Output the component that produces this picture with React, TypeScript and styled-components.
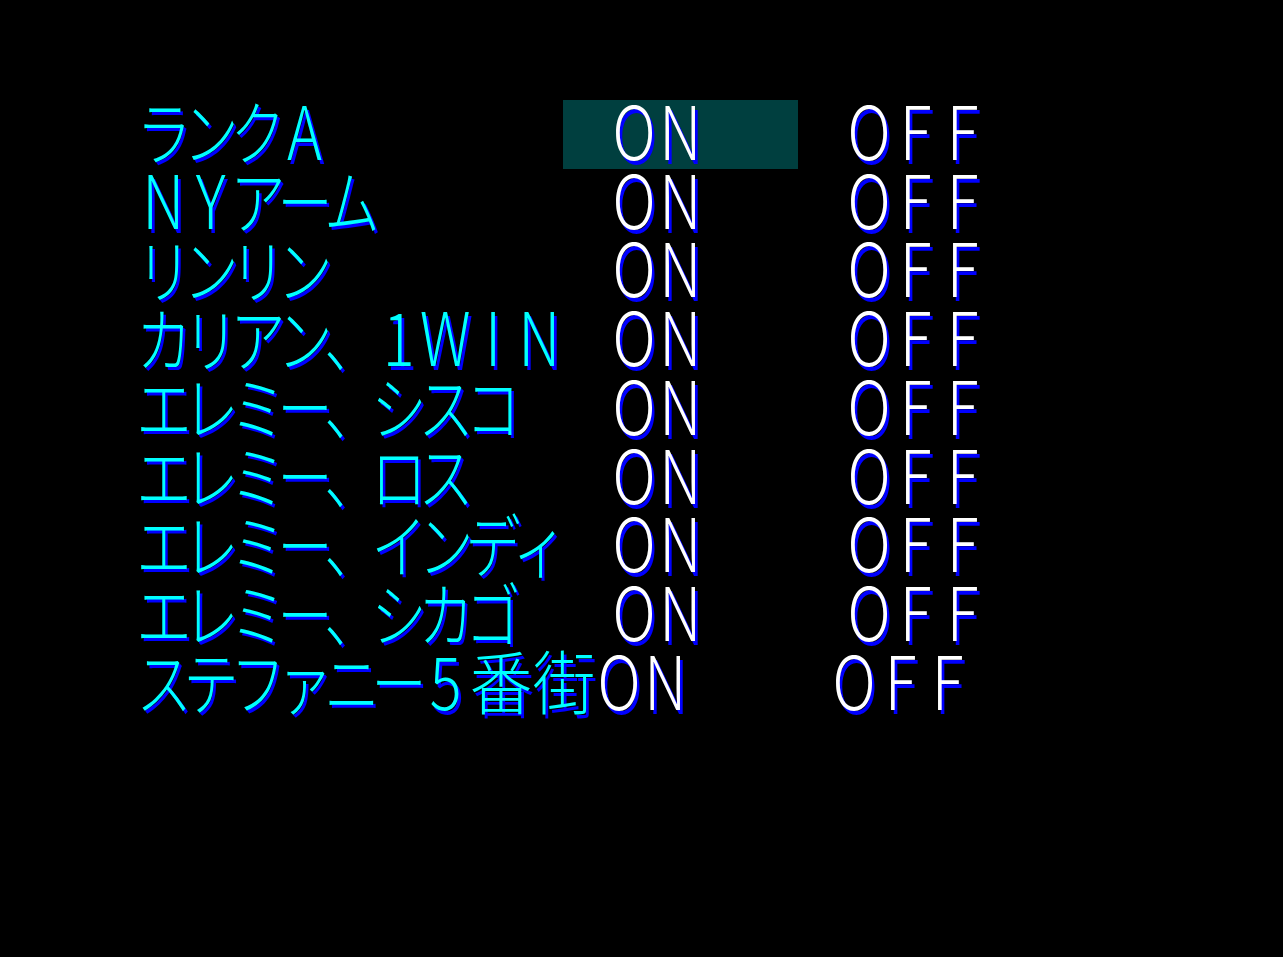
import React from 'react'
import styled, { createGlobalStyle, css } from 'styled-components'

const GlobalStyle = createGlobalStyle`
  html, body {
    margin: 0;
    padding: 0;
    background: #000;
  }
  #root {
    min-height: 100vh;
  }
`

const CELL = 47
const ROW = 68.75

type Kind = 'latin' | 'kana' | 'kanji'

const Screen = styled.div`
  width: 1283px;
  height: 957px;
  background: #000;
  padding: 100px 0 0 140px;
  box-sizing: border-box;
  font-family: "Noto Sans CJK JP", "DejaVu Sans", sans-serif;
  font-weight: 300;
  overflow: hidden;
`

const Menu = styled.div`
  display: flex;
  flex-direction: column;
`

const Row = styled.div<{ $shift?: number }>`
  display: grid;
  grid-template-columns: ${CELL * 9}px ${CELL * 5}px ${CELL * 5}px;
  height: ${ROW}px;

  ${(p) => p.$shift && css`
    & > :not(:first-child) {
      transform: translateX(${p.$shift}px);
    }
  `}
`

const Label = styled.div`
  display: flex;
  height: 100%;
  white-space: nowrap;
  color: #00ffff;
`

const Option = styled.div<{ $active?: boolean }>`
  display: flex;
  height: 100%;
  padding-left: ${CELL}px;
  color: #ffffff;
  background: ${(p) => (p.$active ? '#003f3f' : 'transparent')};
`

const Tile = styled.span<{ $kind: Kind }>`
  display: inline-flex;
  align-items: center;
  justify-content: center;
  flex: none;
  height: 100%;
  width: ${(p) => (p.$kind === 'kanji' ? 63 : CELL)}px;
  padding-bottom: ${(p) => (p.$kind === 'latin' ? 12 : 9)}px;
  box-sizing: border-box;
`

const Glyph = styled.span<{ $kind: Kind }>`
  display: inline-block;
  font-size: 66px;
  line-height: 0.8;
  text-shadow: 3px 3px 0 #0000ff;
  transform: ${(p) =>
    p.$kind === 'latin' ? 'scale(0.9, 1.12)' : p.$kind === 'kanji' ? 'scale(0.95, 1.05)' : 'scale(0.84, 1.06)'};
`

const kindOf = (ch: string): Kind => {
  if (/[\u4e00-\u9fff]/.test(ch)) return 'kanji'
  if (/[\u3000-\u30ff\uff00-\uffef]/.test(ch)) return 'kana'
  return 'latin'
}

const TileText = ({ text }: { text: string }) => (
  <>
    {Array.from(text).map((ch, i) => {
      const kind = kindOf(ch)
      return (
        <Tile key={i} $kind={kind}>
          <Glyph $kind={kind}>{ch}</Glyph>
        </Tile>
      )
    })}
  </>
)

type Setting = { label: string, on: boolean, shift?: number }

const settings: Setting[] = [
  { label: 'ランクA', on: true },
  { label: 'NYアーム', on: true },
  { label: 'リンリン', on: true },
  { label: 'カリアン、1WIN', on: true },
  { label: 'エレミー、シスコ', on: true },
  { label: 'エレミー、ロス', on: true },
  { label: 'エレミー、インディ', on: true },
  { label: 'エレミー、シカゴ', on: true },
  { label: 'ステファニー5番街', on: true, shift: -15 },
]

export default function App () {
  const cursor = 0

  return (
    <>
      <GlobalStyle />
      <Screen>
        <Menu>
          {settings.map((s, i) => (
            <Row key={s.label} $shift={s.shift}>
              <Label>
                <TileText text={s.label} />
              </Label>
              <Option $active={i === cursor}>
                <TileText text="ON" />
              </Option>
              <Option>
                <TileText text="OFF" />
              </Option>
            </Row>
          ))}
        </Menu>
      </Screen>
    </>
  )
}
